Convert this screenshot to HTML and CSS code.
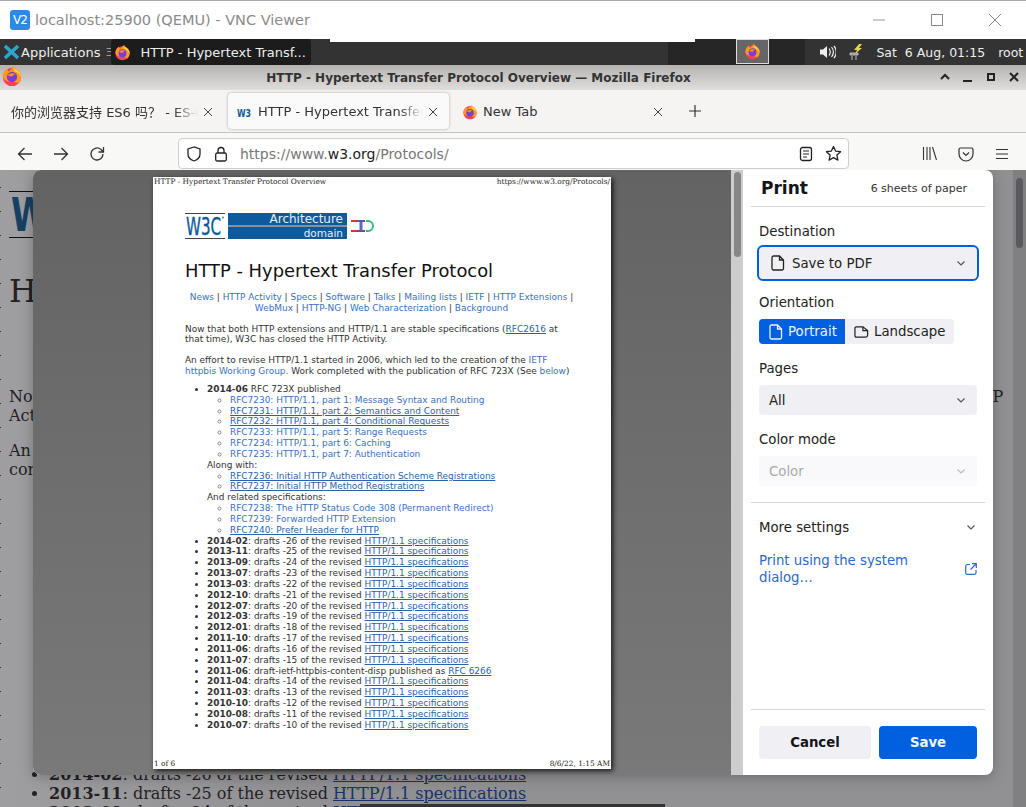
FILE: index.html
```html
<!DOCTYPE html>
<html lang="en">
   <head>
      <meta charset="UTF-8">
      <title>localhost:25900 (QEMU) - VNC Viewer</title>
      <link rel="stylesheet" href="styles.css">
   </head>
   <body>
      <svg class="defs" width="0" height="0">
         <symbol id="fx" viewBox="0 0 24 24">
            <circle cx="12" cy="13" r="10" fill="#ff3f56"/>
            <path d="M2 13C2 8 5 5 7 4c0 2 1 3 2 3 1-2 3-4 6-6-1 2 0 3 2 4 3 2 5 5 5 8 0 3-1 5-3 7-2-1-6-2-9-2-4 0-7-2-8-5z" fill="#ff9a1f"/>
            <path d="M15 1c-1 2 0 3 2 4 3 2 5 5 5 8-2-3-4-5-7-6-1-2-1-4 0-6z" fill="#ffd43a"/>
            <circle cx="12" cy="13" r="5.6" fill="#7b3fd0"/>
            <path d="M7 11c2-2 6-3 9-1-2 0-3 1-3 2-2 1-4 0-6-1z" fill="#ff8a2a"/>
         </symbol>
         <symbol id="chev" viewBox="0 0 12 12">
            <path d="M2.500 4.500 6 8l3.500-3.500" fill="none" stroke="currentColor" stroke-width="1.200"/>
         </symbol>
         <symbol id="doc" viewBox="0 0 14 16">
            <path d="M2.500 1h6L12.500 5v8.500a1.500 1.500 0 0 1-1.500 1.500H2.500A1.500 1.500 0 0 1 1 13.500V2.500A1.500 1.500 0 0 1 2.500 1zM8.500 1v4h4" fill="none" stroke="currentColor" stroke-width="1.300"/>
         </symbol>
         <symbol id="x" viewBox="0 0 12 12">
            <path d="M2 2l8 8M10 2l-8 8" stroke="#444" stroke-width="1"/>
         </symbol>
      </svg>

      <div class="vnc-title">
         <div class="vnc-logo">V2</div>
         <div class="vnc-text">localhost:25900 (QEMU) - VNC Viewer</div>
         <div class="vnc-controls">
            <svg width="14" height="14" viewBox="0 0 14 14"><path d="M1 7h12" stroke="#999"/></svg>
            <svg width="14" height="14" viewBox="0 0 14 14"><rect x="1.500" y="1.500" width="11" height="11" fill="none" stroke="#888"/></svg>
            <svg width="14" height="14" viewBox="0 0 14 14"><path d="M1 1l12 12M13 1 1 13" stroke="#888"/></svg>
         </div>
      </div>

      <div class="panel">
         <svg class="apps-icon" width="15" height="14" viewBox="0 0 15 14"><path d="M1 1l13 12M14 1 1 13" stroke="#2aa7c9" stroke-width="3.500"/></svg>
         <span class="apps">Applications</span>
         <span class="apps-sep">Ξ</span>
         <div class="task">
            <svg width="17" height="17"><use href="#fx"/></svg>
            <span>HTTP - Hypertext Transf...</span>
         </div>
         <div class="panel-dark">
            <div class="tray-btn"><svg width="17" height="17"><use href="#fx"/></svg></div>
         </div>
         <div class="tray">
            <svg width="16" height="14" viewBox="0 0 16 14"><path d="M0 4.500h3L7 1v12L3 9.500H0z" fill="#eee"/><path d="M9 3.500c1.500 2 1.500 5 0 7M11.500 2c2.300 3 2.300 7 0 10M14 1c3 3.500 3 8.500 0 12" fill="none" stroke="#eee" stroke-width="1.200"/></svg>
            <svg width="15" height="17" viewBox="0 0 15 17"><path d="M10 0 5 6h3L6 10l7-6h-3l3-4z" fill="#e8d44a"/><path d="M1 9h8v2H1zM3 12v4M7 12v4" stroke="#bbb" fill="#999"/></svg>
            <span class="clock">Sat&nbsp; 6 Aug, 01:15</span>
            <span class="user">root</span>
         </div>
      </div>

      <div class="fx-title">
         <svg class="fx-logo" width="22" height="22"><use href="#fx"/></svg>
         <span>HTTP - Hypertext Transfer Protocol Overview — Mozilla Firefox</span>
         <div class="fx-controls">
            <svg width="12" height="12" viewBox="0 0 12 12"><path d="M2 8l4-4 4 4" fill="none" stroke="#222" stroke-width="2"/></svg>
            <svg width="12" height="12" viewBox="0 0 12 12"><path d="M1 10h9" stroke="#222" stroke-width="2"/></svg>
            <svg width="12" height="12" viewBox="0 0 12 12"><rect x="3" y="3" width="6" height="6" fill="none" stroke="#222" stroke-width="2"/></svg>
            <svg width="12" height="12" viewBox="0 0 12 12"><path d="M2 2l8 8M10 2l-8 8" stroke="#222" stroke-width="2"/></svg>
         </div>
      </div>

      <div class="tabs">
         <div class="tab tab-first">
            <span class="tab-label cjk">你的浏览器支持 ES6 吗？ - ES-Checker</span>
            <svg class="tab-x" width="12" height="12"><use href="#x"/></svg>
         </div>
         <div class="tab tab-active">
            <svg class="w3-mini" width="14" height="12" viewBox="0 0 14 12"><text x="0" y="10.500" textLength="14" lengthAdjust="spacingAndGlyphs" class="w3-mini-text">W3</text></svg>
            <span class="tab-label">HTTP - Hypertext Transfer Protocol</span>
            <svg class="tab-x" width="12" height="12"><use href="#x"/></svg>
         </div>
         <div class="tab tab-new">
            <svg width="16" height="16"><use href="#fx"/></svg>
            <span class="tab-label">New Tab</span>
            <svg class="tab-x" width="12" height="12"><use href="#x"/></svg>
         </div>
         <svg class="tab-plus" width="14" height="14" viewBox="0 0 14 14"><path d="M7 1v12M1 7h12" stroke="#333" stroke-width="1.200"/></svg>
      </div>

      <div class="nav">
         <svg class="nav-btn" width="16" height="16" viewBox="0 0 16 16"><path d="M15 8H1.500M7.500 2 1.500 8l6 6" fill="none" stroke="#333" stroke-width="1.300"/></svg>
         <svg class="nav-btn" width="16" height="16" viewBox="0 0 16 16"><path d="M1 8h13.500M8.500 2l6 6-6 6" fill="none" stroke="#333" stroke-width="1.300"/></svg>
         <svg class="nav-btn" width="16" height="16" viewBox="0 0 16 16"><path d="M14 8a6 6 0 1 1-2-4.500L14 5.500M14.500 1v5h-5" fill="none" stroke="#333" stroke-width="1.300"/></svg>
         <div class="urlbar">
            <svg width="16" height="16" viewBox="0 0 16 16"><path d="M8 1 2 3v5c0 3.500 3 6 6 7 3-1 6-3.500 6-7V3z" fill="none" stroke="#222" stroke-width="1.300"/></svg>
            <svg width="14" height="16" viewBox="0 0 14 16"><path d="M4 7V4.500a3 3 0 0 1 6 0V7" fill="none" stroke="#222" stroke-width="1.300"/><rect x="1.700" y="7" width="10.600" height="8" rx="1.500" fill="none" stroke="#222" stroke-width="1.300"/></svg>
            <span class="url">https://www.<b>w3.org</b>/Protocols/</span>
            <svg width="14" height="16" viewBox="0 0 14 16"><rect x="1.500" y="1.500" width="11" height="13" rx="2" fill="none" stroke="#222" stroke-width="1.300"/><path d="M4 5h6M4 8h6M4 11h4" stroke="#222"/></svg>
            <svg width="17" height="17" viewBox="0 0 17 17"><path d="m8.500 1.500 2.100 4.600 5 .6-3.700 3.400 1 5-4.400-2.500-4.400 2.500 1-5L1.400 6.700l5-.6z" fill="none" stroke="#222" stroke-width="1.300" stroke-linejoin="round"/></svg>
         </div>
         <div class="nav-right">
            <svg width="15" height="15" viewBox="0 0 15 15"><path d="M1.500 1v13M5 1v13M8 1v13M10.500 1l4 13" stroke="#333" stroke-width="1.100"/></svg>
            <svg width="16" height="16" viewBox="0 0 16 16"><path d="M2.500 2h11A1.500 1.500 0 0 1 15 3.500V8A7 7 0 0 1 1 8V3.500A1.500 1.500 0 0 1 2.500 2z" fill="none" stroke="#333" stroke-width="1.200"/><path d="M5 6.500 8 9.500l3-3" fill="none" stroke="#333" stroke-width="1.200"/></svg>
            <svg width="14" height="14" viewBox="0 0 14 14"><path d="M1 2.500h12M1 7h12M1 11.500h12" stroke="#333" stroke-width="1.200"/></svg>
         </div>
      </div>

      <div class="content">
         <div class="bg-page">
            <div class="bg-logo">
               <svg width="90" height="44" viewBox="0 0 90 44"><text x="2" y="39" textLength="84" lengthAdjust="spacingAndGlyphs" class="bg-logo-text">W3C</text></svg>
            </div>
            <h1 class="bg-h1">HTTP - Hypertext Transfer Protocol</h1>
            <p class="bg-p">Now that both HTTP extensions and HTTP/1.1 are stable specifications (RFC2616 at that time), W3C has closed the HTTP Activity.</p>
            <p class="bg-p">An effort to revise HTTP/1.1 started in 2006, which led to the creation of the IETF httpbis Working Group. Work completed with the publication of RFC 723X (See below)</p>
            <ul class="bg-list">
               <li><b>2014-02</b>: drafts -26 of the revised <a>HTTP/1.1 specifications</a></li>
               <li><b>2013-11</b>: drafts -25 of the revised <a>HTTP/1.1 specifications</a></li>
               <li><b>2013-09</b>: drafts -24 of the revised <a>HTTP/1.1 specifications</a></li>
            </ul>
         </div>
         <div class="bg-overlay"></div>
         <div class="bg-ticks"></div>
         <div class="bg-scroll"><div class="bg-thumb"></div></div>
         <div class="bg-glitch"></div>

         <div class="dialog">
            <div class="preview">
               <div class="sheet">
                  <div class="sheet-head"><span>HTTP - Hypertext Transfer Protocol Overview</span><span>https://www.w3.org/Protocols/</span></div>
                  <div class="sheet-body">
                     <div class="logos">
                        <div class="w3c">
                           <svg width="40" height="24" viewBox="0 0 40 24"><text x="1" y="21" textLength="35" lengthAdjust="spacingAndGlyphs" class="w3c-text">W3C</text><circle cx="38" cy="3.500" r="1" fill="#777"/></svg>
                        </div>
                        <div class="arch"><span>Architecture</span><i></i><span class="arch-sub">domain</span></div>
                        <svg width="24" height="14" viewBox="0 0 24 14"><path d="M1 2h6M1 12h6" stroke="#d33" stroke-width="2"/><path d="M7 2h8M7 12h8" stroke="#55a" stroke-width="2"/><rect x="9.500" y="3" width="3" height="8" fill="#66b"/><path d="M16 2h2a5 5 0 0 1 0 10h-2" fill="none" stroke="#3b7" stroke-width="2"/></svg>
                     </div>
                     <h1 class="sheet-h1">HTTP - Hypertext Transfer Protocol</h1>
                     <div class="sheet-nav"><a>News</a> | <a>HTTP Activity</a> | <a>Specs</a> | <a>Software</a> | <a>Talks</a> | <a>Mailing lists</a> | <a>IETF</a> | <a>HTTP Extensions</a> | <a>WebMux</a> | <a>HTTP-NG</a> | <a>Web Characterization</a> | <a>Background</a></div>
                     <p>Now that both HTTP extensions and HTTP/1.1 are stable specifications (<a class="u">RFC2616</a> at that time), W3C has closed the HTTP Activity.</p>
                     <p>An effort to revise HTTP/1.1 started in 2006, which led to the creation of the <a>IETF httpbis Working Group.</a> Work completed with the publication of RFC 723X (See <a>below</a>)</p>
                     <ul class="main-list">
                        <li><b>2014-06</b> RFC 723X published
                           <ul>
                              <li><a>RFC7230: HTTP/1.1, part 1: Message Syntax and Routing</a></li>
                              <li><a class="u">RFC7231: HTTP/1.1, part 2: Semantics and Content</a></li>
                              <li><a class="u">RFC7232: HTTP/1.1, part 4: Conditional Requests</a></li>
                              <li><a>RFC7233: HTTP/1.1, part 5: Range Requests</a></li>
                              <li><a>RFC7234: HTTP/1.1, part 6: Caching</a></li>
                              <li><a>RFC7235: HTTP/1.1, part 7: Authentication</a></li>
                           </ul>
                           Along with:
                           <ul>
                              <li><a class="u">RFC7236: Initial HTTP Authentication Scheme Registrations</a></li>
                              <li><a class="u">RFC7237: Initial HTTP Method Registrations</a></li>
                           </ul>
                           And related specifications:
                           <ul>
                              <li><a>RFC7238: The HTTP Status Code 308 (Permanent Redirect)</a></li>
                              <li><a>RFC7239: Forwarded HTTP Extension</a></li>
                              <li><a class="u">RFC7240: Prefer Header for HTTP</a></li>
                           </ul>
                        </li>
                        <li><b>2014-02</b>: drafts -26 of the revised <a class="u">HTTP/1.1 specifications</a></li>
                        <li><b>2013-11</b>: drafts -25 of the revised <a class="u">HTTP/1.1 specifications</a></li>
                        <li><b>2013-09</b>: drafts -24 of the revised <a class="u">HTTP/1.1 specifications</a></li>
                        <li><b>2013-07</b>: drafts -23 of the revised <a class="u">HTTP/1.1 specifications</a></li>
                        <li><b>2013-03</b>: drafts -22 of the revised <a class="u">HTTP/1.1 specifications</a></li>
                        <li><b>2012-10</b>: drafts -21 of the revised <a class="u">HTTP/1.1 specifications</a></li>
                        <li><b>2012-07</b>: drafts -20 of the revised <a class="u">HTTP/1.1 specifications</a></li>
                        <li><b>2012-03</b>: drafts -19 of the revised <a class="u">HTTP/1.1 specifications</a></li>
                        <li><b>2012-01</b>: drafts -18 of the revised <a class="u">HTTP/1.1 specifications</a></li>
                        <li><b>2011-10</b>: drafts -17 of the revised <a class="u">HTTP/1.1 specifications</a></li>
                        <li><b>2011-06</b>: drafts -16 of the revised <a class="u">HTTP/1.1 specifications</a></li>
                        <li><b>2011-07</b>: drafts -15 of the revised <a class="u">HTTP/1.1 specifications</a></li>
                        <li><b>2011-06</b>: draft-ietf-httpbis-content-disp published as <a class="u">RFC 6266</a></li>
                        <li><b>2011-04</b>: drafts -14 of the revised <a class="u">HTTP/1.1 specifications</a></li>
                        <li><b>2011-03</b>: drafts -13 of the revised <a class="u">HTTP/1.1 specifications</a></li>
                        <li><b>2010-10</b>: drafts -12 of the revised <a class="u">HTTP/1.1 specifications</a></li>
                        <li><b>2010-08</b>: drafts -11 of the revised <a class="u">HTTP/1.1 specifications</a></li>
                        <li><b>2010-07</b>: drafts -10 of the revised <a class="u">HTTP/1.1 specifications</a></li>
                     </ul>
                  </div>
                  <div class="sheet-foot"><span>1 of 6</span><span>8/6/22, 1:15 AM</span></div>
               </div>
            </div>
            <div class="preview-scroll"><div class="preview-thumb"></div></div>

            <div class="side">
               <div class="side-head"><span class="side-title">Print</span><span class="sheets">6 sheets of paper</span></div>
               <div class="field field-dest">
                  <div class="label">Destination</div>
                  <div class="select select-dest">
                     <svg width="14" height="16"><use href="#doc"/></svg>
                     <span>Save to PDF</span>
                     <svg class="chev" width="12" height="12"><use href="#chev"/></svg>
                  </div>
               </div>
               <div class="field field-orient">
                  <div class="label">Orientation</div>
                  <div class="toggle">
                     <div class="toggle-on"><svg width="14" height="16"><use href="#doc"/></svg>Portrait</div>
                     <div class="toggle-off"><svg width="15" height="14" viewBox="0 0 16 14"><path d="M2.500 1.500h7l5 4v5a2 2 0 0 1-2 2h-10a1.500 1.500 0 0 1-1.500-1.500V3a1.500 1.500 0 0 1 1.500-1.500zM9.500 1.500v4h5" fill="none" stroke="currentColor" stroke-width="1.300"/></svg>Landscape</div>
                  </div>
               </div>
               <div class="field">
                  <div class="label">Pages</div>
                  <div class="select"><span>All</span><svg class="chev" width="12" height="12"><use href="#chev"/></svg></div>
               </div>
               <div class="field">
                  <div class="label">Color mode</div>
                  <div class="select select-off"><span>Color</span><svg class="chev" width="12" height="12"><use href="#chev"/></svg></div>
               </div>
               <div class="more">
                  <div class="more-row"><span>More settings</span><svg class="chev" width="12" height="12"><use href="#chev"/></svg></div>
                  <div class="system">
                     <span>Print using the system dialog…</span>
                     <svg width="12" height="12" viewBox="0 0 12 12"><path d="M5 1.500H2A1.500 1.500 0 0 0 .7 3v7A1.500 1.500 0 0 0 2 11.300h7.500A1.500 1.500 0 0 0 11 10V7M7 .7h4.300V5M11 1 5.500 6.500" fill="none" stroke="currentColor" stroke-width="1.200"/></svg>
                  </div>
               </div>
               <div class="side-foot">
                  <div class="btn btn-cancel">Cancel</div>
                  <div class="btn btn-save">Save</div>
               </div>
            </div>
         </div>
      </div>
   </body>
</html>
```
FILE: styles.css
```css
* {
margin: 0;
padding: 0;
box-sizing: border-box;
}
html, body {
width: 1026px;
height: 807px;
overflow: hidden;
}
body {
display: flex;
flex-direction: column;
background: white;
font-family: "DejaVu Sans", sans-serif;
color: #222;
}
.defs {
position: absolute;
}
svg {
display: block;
flex-shrink: 0;
}

/* vnc window title */
.vnc-title {
height: 39px;
display: flex;
align-items: center;
background: white;
border-top: 1px solid #aaa;
padding-left: 10px;
}
.vnc-logo {
width: 20px;
height: 20px;
background: #2b8ae6;
border-radius: 3px;
color: white;
font-size: 12px;
line-height: 20px;
text-align: center;
letter-spacing: -1px;
}
.vnc-text {
margin-left: 5px;
font-size: 14.500px;
color: #8a8a8a;
flex: 1;
}
.vnc-controls {
display: flex;
gap: 44px;
padding-right: 24px;
}

/* xfce panel */
.panel {
height: 26px;
display: flex;
align-items: center;
background: #333;
color: #eee;
font-size: 13px;
position: relative;
white-space: nowrap;
}
.panel::before {
content: "";
position: absolute;
left: 330px;
top: 0;
width: 365px;
height: 3px;
background: white;
}
.apps-icon {
margin-left: 4px;
}
.apps {
margin-left: 2px;
}
.apps-sep {
margin-left: 5px;
width: 6px;
overflow: hidden;
color: #999;
font-size: 11px;
}
.task {
width: 200px;
height: 26px;
display: flex;
align-items: center;
gap: 9px;
padding-left: 3px;
background: #1c1c1c;
border-radius: 4px;
}
.panel-dark {
margin-left: 357px;
width: 137px;
height: 26px;
background: #262626;
padding-left: 68px;
}
.tray-btn {
width: 33px;
height: 25px;
background: #666;
border: 1px solid #ddd;
display: flex;
align-items: center;
justify-content: center;
}
.tray {
flex: 1;
display: flex;
align-items: center;
padding-left: 15px;
}
.tray svg + svg {
margin-left: 13px;
}
.clock {
margin-left: 12px;
font-size: 12.500px;
}
.user {
margin-left: 13px;
font-size: 12.500px;
}

/* firefox window */
.fx-title {
height: 25px;
display: flex;
align-items: center;
justify-content: center;
padding-right: 69px;
font-size: 12px;
font-weight: bold;
color: #333;
background: linear-gradient(to bottom, #b4b3b1, #dfdedc);
position: relative;
}
.fx-logo {
position: absolute;
left: 1px;
top: 0;
}
.fx-controls {
position: absolute;
right: 6px;
top: 6px;
display: flex;
gap: 11px;
}
.tabs {
height: 43px;
display: flex;
align-items: center;
background: #f5f4f3;
border-bottom: 1px solid #c4c4c4;
font-size: 13px;
padding-left: 2px;
}
.tab {
height: 36px;
width: 221px;
display: flex;
align-items: center;
padding: 1px 9px 0;
color: #333;
position: relative;
}
.tab-first {
width: 226px;
padding-right: 14px;
}
.tab-active {
background: #fafafa;
border-radius: 4px;
box-shadow: 0 0 3px rgba(0, 0, 0, 0.3);
padding-right: 10px;
margin-right: 3px;
}
.tab-new {
gap: 5px;
padding-left: 10px;
}
.cjk {
font-family: "DejaVu Sans", "Noto Sans CJK SC", sans-serif;
}
.w3-mini {
margin-right: 7px;
}
.w3-mini-text {
font-size: 11px;
font-weight: bold;
fill: #0a5a96;
}
.tab-label {
flex: 1;
overflow: hidden;
white-space: nowrap;
-webkit-mask-image: linear-gradient(to left, transparent 0, black 24px);
mask-image: linear-gradient(to left, transparent 0, black 24px);
}
.tab-new .tab-label {
-webkit-mask-image: none;
mask-image: none;
}
.tab-x {
margin-left: 4px;
}
.tab-plus {
margin-left: 15px;
}
.nav {
height: 37px;
display: flex;
align-items: center;
background: #f8f8f7;
padding: 4px 0 0 17px;
}
.nav-btn {
margin-right: 20px;
}
.urlbar {
width: 671px;
height: 31px;
margin-left: 53px;
display: flex;
align-items: center;
gap: 12px;
padding: 0 6px 0 7px;
background: white;
border: 1px solid #cfcfcf;
border-radius: 4px;
}
.url {
flex: 1;
font-size: 14px;
color: #777;
}
.url b {
font-weight: normal;
color: #222;
}
.nav-right {
display: flex;
align-items: center;
gap: 21px;
margin-left: 73px;
}

/* page behind the dialog */
.content {
flex: 1;
position: relative;
overflow: hidden;
min-height: 0;
}
.bg-page {
padding: 21px 8px 0 9px;
width: 1015px;
font-family: "DejaVu Serif", serif;
color: #222;
}
.bg-logo {
height: 47px;
width: 110px;
border-top: 1px solid #000;
border-bottom: 1px solid #000;
}
.bg-logo-text {
font-family: "DejaVu Sans", sans-serif;
font-size: 46px;
font-weight: bold;
fill: #0a5a96;
}
.bg-h1 {
font-size: 32px;
font-weight: normal;
margin-top: 34px;
white-space: nowrap;
}
.bg-p {
font-size: 16px;
line-height: 19px;
margin-top: 16px;
}
.bg-h1 + .bg-p {
margin-top: 77px;
}
.bg-list {
margin-top: 286px;
padding-left: 40px;
font-size: 16px;
line-height: 19px;
}
.bg-list a {
color: #0645ad;
text-decoration: underline;
}
.bg-overlay {
position: absolute;
inset: 0;
background: linear-gradient(to right, rgba(35, 33, 38, 0.44), rgba(35, 33, 38, 0.5) 30%);
}
.bg-ticks {
position: absolute;
left: 0;
top: -6px;
bottom: 0;
width: 1px;
background: repeating-linear-gradient(to bottom, transparent 0, transparent 23px, #333 23px, #333 24px);
}
.bg-scroll {
position: absolute;
right: 0;
top: 0;
bottom: 0;
width: 13px;
background: #808080;
}
.bg-thumb {
width: 7px;
height: 70px;
margin: 8px 0 0 3px;
border-radius: 4px;
background: #5a5a5e;
}
.bg-glitch {
position: absolute;
left: 360px;
bottom: 0;
width: 305px;
height: 3px;
background: #333;
}

/* print dialog */
.dialog {
position: absolute;
left: 33px;
top: 0;
width: 960px;
height: 605px;
display: flex;
background: white;
border-radius: 8px;
overflow: hidden;
box-shadow: 0 2px 14px rgba(0, 0, 0, 0.25);
}
.preview {
width: 698px;
padding: 7px 0 0 120px;
background: linear-gradient(to bottom, #636363, #797979);
}
.preview-scroll {
width: 12px;
background: #cdcdcd;
}
.preview-thumb {
width: 7px;
height: 85px;
margin: 2px 0 0 3px;
border-radius: 4px;
background: #868686;
}
.sheet {
width: 458px;
height: 592px;
display: flex;
flex-direction: column;
background: white;
color: #333;
font-size: 8.950px;
line-height: 10.830px;
box-shadow: 2px 2px 5px rgba(0, 0, 0, 0.8);
}
.sheet-head, .sheet-foot {
display: flex;
justify-content: space-between;
font-family: "DejaVu Serif", serif;
font-size: 7.400px;
line-height: 10px;
padding: 0 1px;
color: #222;
}
.sheet-body {
flex: 1;
padding: 26px 33px 0 32px;
}
.sheet a {
color: #3a72bd;
}
.sheet a.u {
color: #2a62ac;
text-decoration: underline;
}
.logos {
display: flex;
align-items: center;
gap: 3px;
height: 26px;
}
.w3c {
width: 40px;
height: 26px;
border-top: 1px solid #444;
border-bottom: 1px solid #444;
}
.w3c-text {
font-size: 24px;
fill: #0a5a96;
stroke: #0a5a96;
stroke-width: 0.4px;
}
.arch {
width: 119px;
height: 26px;
background: #0f5a9c;
color: #e8eef5;
display: flex;
flex-direction: column;
align-items: flex-end;
padding-right: 4px;
font-size: 12px;
line-height: 12px;
}
.arch-sub {
font-size: 10.500px;
}
.arch i {
align-self: stretch;
height: 2px;
margin-right: -4px;
background: #8a8f98;
flex-shrink: 0;
}
.sheet-h1 {
margin-top: 20px;
font-size: 17.900px;
font-weight: normal;
line-height: 24px;
color: #111;
white-space: nowrap;
}
.sheet-nav {
margin-top: 9px;
text-align: center;
}
.sheet p {
margin-top: 10px;
}
.main-list {
margin-top: 7px;
padding-left: 22px;
}
.main-list ul {
padding-left: 23px;
list-style: circle;
}
.main-list ul li::marker {
color: #888;
}

/* print sidebar */
.side {
width: 250px;
display: flex;
flex-direction: column;
font-size: 13.300px;
}
.side-head {
height: 37px;
margin: 0 8px;
padding: 0 18px 0 10px;
display: flex;
align-items: center;
justify-content: space-between;
border-bottom: 1px solid #d7d7db;
}
.side-title {
font-size: 17px;
font-weight: bold;
color: #15141a;
}
.sheets {
font-size: 11px;
color: #333;
}
.field {
padding: 0 16px;
margin-top: 15px;
}
.field-orient {
margin-top: 12px;
}
.label {
height: 18px;
line-height: 20px;
margin-bottom: 8px;
color: #222;
}
.field-dest .label {
margin-bottom: 5px;
}
.select {
height: 30px;
display: flex;
align-items: center;
padding: 0 10px;
background: #f0f0f4;
border-radius: 4px;
color: #222;
}
.select span {
flex: 1;
}
.select-dest {
height: 36px;
margin: 0 -2px;
padding: 0 10px 0 12px;
gap: 7px;
border: 2px solid #0060df;
border-radius: 6px;
}
.select-off {
background: #f9f9fb;
color: #aaa;
}
.chev {
color: #555;
}
.select-off .chev {
color: #bbb;
}
.toggle {
display: flex;
width: 195px;
height: 25px;
border-radius: 4px;
overflow: hidden;
background: #f0f0f4;
}
.toggle-on, .toggle-off {
display: flex;
align-items: center;
gap: 5px;
padding-left: 10px;
}
.toggle-on {
width: 86px;
background: #0060df;
color: #eef4fd;
}
.toggle-off {
flex: 1;
padding-left: 9px;
}
.more {
margin: 16px 8px 0;
padding: 0 8px;
border-top: 1px solid #d7d7db;
flex: 1;
}
.more-row {
display: flex;
align-items: center;
justify-content: space-between;
height: 18px;
margin-top: 15px;
}
.system {
display: flex;
align-items: center;
justify-content: space-between;
margin-top: 16px;
color: #2a6ac8;
line-height: 17px;
}
.system span {
width: 170px;
}
.side-foot {
margin: 0 8px;
padding: 16px 8px;
display: flex;
gap: 8px;
border-top: 1px solid #d7d7db;
}
.btn {
height: 33px;
line-height: 33px;
text-align: center;
font-weight: bold;
border-radius: 4px;
}
.btn-cancel {
width: 112px;
background: #f0f0f4;
color: #15141a;
}
.btn-save {
width: 98px;
background: #0060df;
color: #f5f9ff;
}
```
